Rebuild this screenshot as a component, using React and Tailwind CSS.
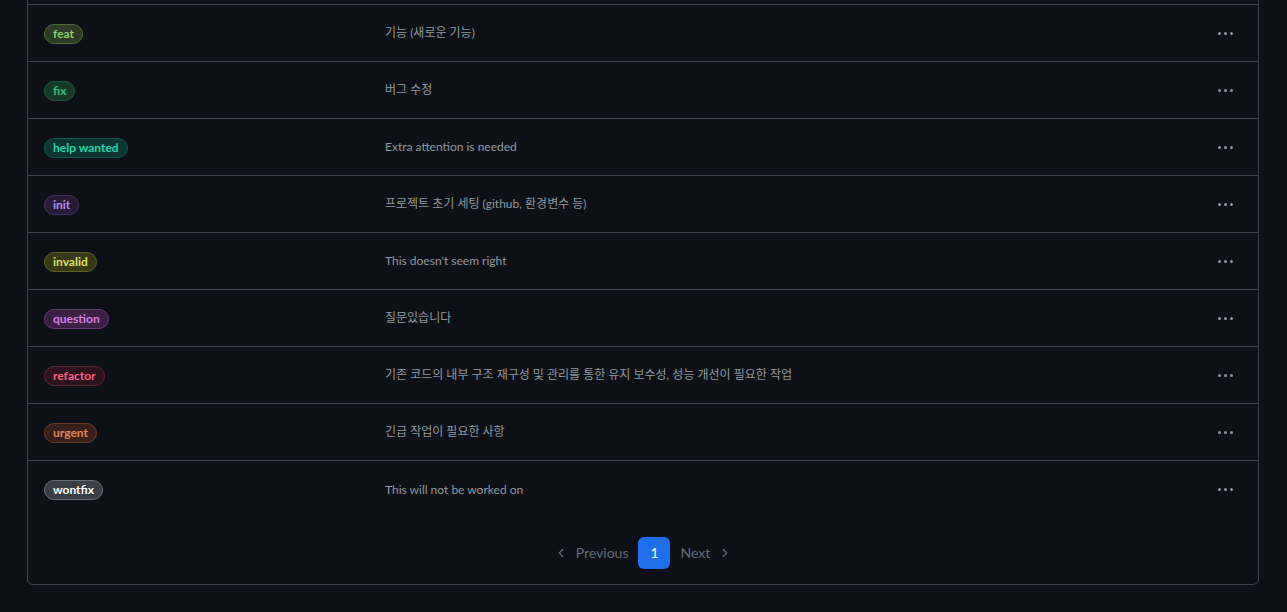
import { ChevronLeft, ChevronRight } from 'lucide-react';

const labels = [
    { name: 'feat', desc: '기능 (새로운 기능)', cls: 'text-[#8fce6a] bg-[#2b3b24] border-[#4b6b38]' },
    { name: 'fix', desc: '버그 수정', cls: 'text-[#33c27a] bg-[#153a28] border-[#1f5a3c]' },
    { name: 'help wanted', desc: 'Extra attention is needed', cls: 'text-[#19dba6] bg-[#0b3530] border-[#0e5a4a]' },
    { name: 'init', desc: '프로젝트 초기 세팅 (github, 환경변수 등)', cls: 'text-[#b78cf7] bg-[#261a36] border-[#47335f]' },
    { name: 'invalid', desc: "This doesn't seem right", cls: 'text-[#dde25e] bg-[#363818] border-[#5c5f26]' },
    { name: 'question', desc: '질문있습니다', cls: 'text-[#d77ee6] bg-[#3a2141] border-[#663a70]' },
    { name: 'refactor', desc: '기존 코드의 내부 구조 재구성 및 관리를 통한 유지 보수성, 성능 개선이 필요한 작업', cls: 'text-[#ff5c86] bg-[#2b131e] border-[#64223a]' },
    { name: 'urgent', desc: '긴급 작업이 필요한 사항', cls: 'text-[#ea8560] bg-[#372019] border-[#6c3a28]' },
    { name: 'wontfix', desc: 'This will not be worked on', cls: 'text-white bg-[#3a3e45] border-[#6b7078]' },
];

const Dots = () => (
    <button className="w-8 h-8 flex items-center justify-center gap-[3px] rounded-md">
        <span className="w-[3px] h-[3px] rounded-full bg-[#9198a1]" />
        <span className="w-[3px] h-[3px] rounded-full bg-[#9198a1]" />
        <span className="w-[3px] h-[3px] rounded-full bg-[#9198a1]" />
    </button>
);

const App = () => {
    return (
        <div
            className="min-h-[612px] bg-[#0d1117] overflow-hidden"
            style={{ fontFamily: 'Lato, "Noto Sans CJK KR", sans-serif' }}
        >
            <div className="ml-[27px] w-[1232px] -mt-[53px] border border-[#3d444d] rounded-md">
                {/* Rows above scrolled out of view */}
                <div className="h-[57px] border-b border-[#3d444d]" />

                {/* Label rows */}
                <div>
                    {labels.map((label) => (
                        <div
                            key={label.name}
                            className="h-[57px] flex items-center border-b border-[#3d444d] last:border-b-0 pl-4 pr-[17px]"
                        >
                            <div className="w-[341px] shrink-0 flex pt-px">
                                <span className={`inline-flex items-center h-5 px-[8px] rounded-full border text-xs font-bold leading-none ${label.cls}`}>
                                    {label.name}
                                </span>
                            </div>
                            <div className="flex-1 text-xs text-[#9198a1]">{label.desc}</div>
                            <Dots />
                        </div>
                    ))}
                </div>

                {/* Pagination */}
                <div className="flex items-center justify-center pt-[19px] pb-[15px] text-sm">
                    <span className="flex items-center gap-[8px] text-[#656c76] px-[6px]">
                        <ChevronLeft size={14} strokeWidth={2} />
                        Previous
                    </span>
                    <span className="mx-1 w-8 h-8 flex items-center justify-center rounded-md bg-[#1f6feb] text-white">1</span>
                    <span className="flex items-center gap-[8px] text-[#656c76] px-[6px]">
                        Next
                        <ChevronRight size={14} strokeWidth={2} />
                    </span>
                </div>
            </div>
        </div>
    );
};

export default App;
